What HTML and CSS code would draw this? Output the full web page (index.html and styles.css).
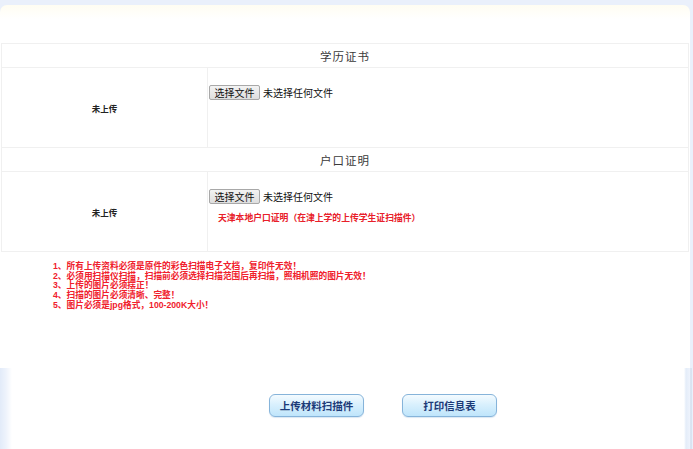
FILE: index.html
```html
<html>
	<head>
		<meta charset="utf-8">
		<meta name="viewport" content="width=device-width, initial-scale=1">
		<link rel="stylesheet" href="styles.css">
	</head>
	<body>
		<div class="page">
			<div class="panel">
				<table class="uploads">
					<tr>
						<td class="title" colspan="2">学历证书</td>
					</tr>
					<tr class="item">
						<td class="state">未上传</td>
						<td class="field">
							<label class="file">
								<input type="file" name="xlzs" hidden />
								<span class="file-btn">选择文件</span>
								<span class="file-name">未选择任何文件</span>
							</label>
						</td>
					</tr>
					<tr>
						<td class="title" colspan="2">户口证明</td>
					</tr>
					<tr class="item">
						<td class="state">未上传</td>
						<td class="field">
							<label class="file">
								<input type="file" name="hkzm" hidden />
								<span class="file-btn">选择文件</span>
								<span class="file-name">未选择任何文件</span>
							</label>
							<p class="hint">天津本地户口证明（在津上学的上传学生证扫描件）</p>
						</td>
					</tr>
				</table>
				<div class="notes">
					<div>1、所有上传资料必须是原件的彩色扫描电子文档，复印件无效！</div>
					<div>2、必须用扫描仪扫描，扫描前必须选择扫描范围后再扫描，照相机照的图片无效！</div>
					<div>3、上传的图片必须摆正！</div>
					<div>4、扫描的图片必须清晰、完整！</div>
					<div>5、图片必须是jpg格式，100-200K大小！</div>
				</div>
			</div>
			<div class="actions">
				<button class="btn" name="action" value="upload">上传材料扫描件</button>
				<button class="btn" name="action" value="print">打印信息表</button>
			</div>
		</div>
	</body>
</html>
```

FILE: styles.css
```css
* {
	box-sizing: border-box;
}

body {
	margin: 0;
	background: #eaf0fb;
	font-family: "Noto Sans CJK SC", sans-serif;
}

.page {
	width: 693px;
	padding-top: 5px;
}

.panel {
	width: 690px;
	height: 363px;
	padding-top: 38px;
	background: linear-gradient(#fffdf2, #fff 14px);
	border-radius: 7px 7px 0 0;
}

.uploads {
	width: 688px;
	margin-left: 1px;
	border-collapse: collapse;
}

.uploads td {
	border: 1px solid #f0f0f0;
	padding: 0;
}

.title {
	height: 24px;
	text-align: center;
	font-size: 11.5px;
	letter-spacing: 1px;
	color: #3a3a3a;
}

.item td {
	height: 80px;
}

.state {
	width: 206px;
	text-align: center;
	font-size: 8.5px;
	font-weight: bold;
	color: #222;
}

.field {
	vertical-align: top;
	padding: 17px 0 0 1px !important;
}

.file {
	display: flex;
	align-items: center;
	font-size: 10px;
	color: #111;
}

.file-btn {
	display: inline-block;
	width: 51px;
	height: 15px;
	line-height: 13px;
	text-align: center;
	background: linear-gradient(#f3f3f3, #dedede);
	border: 1px solid #a8a8a8;
	border-radius: 2px;
	margin-right: 3px;
}

.hint {
	margin: 7px 0 0 9px;
	font-size: 8.8px;
	font-weight: bold;
	color: #e8202a;
}

.notes {
	padding: 10px 0 0 53px;
	font-family: "Liberation Sans", "Noto Sans CJK SC", sans-serif;
	font-size: 8.7px;
	line-height: 9.7px;
	font-weight: bold;
	color: #f0202c;
}

.notes div {
	height: 9.7px;
}

.actions {
	display: flex;
	gap: 38px;
	height: 81px;
	padding: 26px 0 0 269px;
	background: linear-gradient(to right, #e2ebf9, #eef3fc 6px, #fff 12px, #fff 684px, #e4edf9 686px, #eef3fc 690px, #c9d6e8 691px, #eaf0fb 692px);
}

.btn {
	width: 95px;
	height: 23px;
	padding: 0;
	border: 1px solid #86b4da;
	border-radius: 6px;
	background: linear-gradient(#f4fbff, #d9f0fd 45%, #bfe5fb);
	box-shadow: 0 1px 1px #dbe8f3;
	font-family: "Noto Sans CJK SC", sans-serif;
	font-size: 10.5px;
	font-weight: bold;
	color: #1c3a78;
}
```
